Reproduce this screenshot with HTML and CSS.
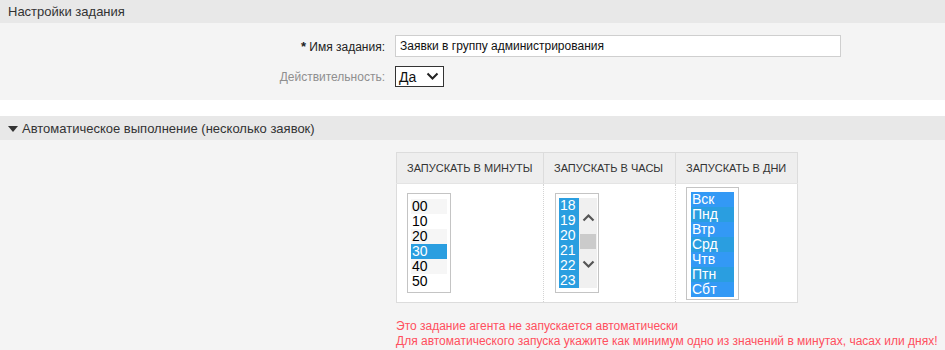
FILE: index.html
```html
<!DOCTYPE html>
<html lang="ru">
<head>
    <meta charset="UTF-8">
    <meta name="viewport" content="width=device-width, initial-scale=1.0">
    <title>Настройки задания</title>
    <link rel="stylesheet" href="styles.css">
</head>
<body>
    <section class="widget">
        <header class="widget-header">
            <h2>Настройки задания</h2>
        </header>
        <div class="widget-content form">
            <div class="field-row">
                <label class="field-label mandatory" for="jobName"><span class="star">*</span> Имя задания:</label>
                <input id="jobName" class="text-input" type="text" value="Заявки в группу администрирования">
            </div>
            <div class="field-row">
                <label class="field-label muted">Действительность:</label>
                <div class="fake-select">
                    <span>Да</span>
                    <svg width="13" height="9" viewBox="0 0 13 9"><path d="M1.5 1.5 L6.5 6.5 L11.5 1.5" fill="none" stroke="#222" stroke-width="2"/></svg>
                </div>
            </div>
        </div>
    </section>

    <section class="widget">
        <header class="widget-header">
            <h2><span class="toggle"></span>Автоматическое выполнение (несколько заявок)</h2>
        </header>
        <div class="widget-content schedule">
            <table class="schedule-table">
                <thead>
                    <tr>
                        <th>Запускать в минуты</th>
                        <th>Запускать в часы</th>
                        <th>Запускать в дни</th>
                    </tr>
                </thead>
                <tbody>
                    <tr>
                        <td>
                            <div class="listbox minutes">
                                <div class="opt">00</div>
                                <div class="opt">10</div>
                                <div class="opt">20</div>
                                <div class="opt selected">30</div>
                                <div class="opt">40</div>
                                <div class="opt">50</div>
                            </div>
                        </td>
                        <td>
                            <div class="listbox hours">
                                <div class="opts">
                                    <div class="opt selected">18</div>
                                    <div class="opt selected">19</div>
                                    <div class="opt selected">20</div>
                                    <div class="opt selected">21</div>
                                    <div class="opt selected">22</div>
                                    <div class="opt selected">23</div>
                                </div>
                                <div class="scrollbar">
                                    <svg class="arrow" width="13" height="9" viewBox="0 0 13 9"><path d="M1.5 7.5 L6.5 2.5 L11.5 7.5" fill="none" stroke="#555" stroke-width="2.2"/></svg>
                                    <div class="thumb"></div>
                                    <svg class="arrow" width="13" height="9" viewBox="0 0 13 9"><path d="M1.5 1.5 L6.5 6.5 L11.5 1.5" fill="none" stroke="#555" stroke-width="2.2"/></svg>
                                </div>
                            </div>
                        </td>
                        <td>
                            <div class="listbox days">
                                <div class="opt selected">Вск</div>
                                <div class="opt selected">Пнд</div>
                                <div class="opt selected">Втр</div>
                                <div class="opt selected">Срд</div>
                                <div class="opt selected">Чтв</div>
                                <div class="opt selected">Птн</div>
                                <div class="opt selected">Сбт</div>
                            </div>
                        </td>
                    </tr>
                </tbody>
            </table>
            <p class="error">Это задание агента не запускается автоматически<br>Для автоматического запуска укажите как минимум одно из значений в минутах, часах или днях!</p>
        </div>
    </section>
</body>
</html>
```

FILE: styles.css
```css
:root {
    --header-bg: #e8e8e8;
    --content-bg: #f4f4f4;
    --text: #333;
    --muted: #8f8f8f;
    --border: #dcdcdc;
    --blue: #2a9ee0;
    --blue-alt: #3399f5;
    --red: #ff4f5e;
}

* {
    margin: 0;
    padding: 0;
    box-sizing: border-box;
}

body {
    background: #fff;
    color: var(--text);
    font-family: "Liberation Sans", Arial, sans-serif;
    font-size: 12px;
    width: 945px;
    height: 350px;
    overflow: hidden;
}

.widget + .widget {
    margin-top: 16px;
}

.widget-header {
    background: var(--header-bg);
    height: 23px;
    display: flex;
    align-items: center;
    padding-left: 8px;
}

.widget + .widget .widget-header {
    height: 24px;
}

.widget-header h2 {
    font-size: 13px;
    font-weight: normal;
    color: #333;
    display: flex;
    align-items: center;
}

.toggle {
    width: 0;
    height: 0;
    border-left: 5px solid transparent;
    border-right: 5px solid transparent;
    border-top: 6px solid #333;
    margin-right: 4px;
    margin-top: 1px;
}

.widget-content {
    background: var(--content-bg);
}

/* form rows */
.form {
    padding: 12px 0 13px;
    display: flex;
    flex-direction: column;
    gap: 9px;
}

.field-row {
    display: flex;
    align-items: center;
}

.field-label {
    width: 385px;
    padding-right: 0;
    margin-right: 10px;
    text-align: right;
    font-size: 12px;
}

.field-label.mandatory {
    color: #222;
}

.star {
    font-weight: bold;
    font-size: 13px;
}

.field-label.muted {
    color: var(--muted);
}

.text-input {
    width: 446px;
    height: 22px;
    border: 1px solid #cfcfcf;
    background: #fff;
    padding: 0 4px;
    font-family: "Liberation Sans", Arial, sans-serif;
    font-size: 12px;
    color: #111;
    outline: none;
}

.fake-select {
    width: 49px;
    height: 21px;
    border: 1px solid #333;
    background: #fff;
    display: flex;
    align-items: center;
    justify-content: space-between;
    padding: 0 4px 0 3px;
    font-size: 14px;
    color: #111;
}

/* schedule */
.schedule {
    padding: 12px 0 3px 396px;
    height: 210px;
}

.schedule-table {
    border-collapse: collapse;
    border: 1px solid var(--border);
    background: #fff;
}

.schedule-table th {
    background: #eeeeee;
    height: 31px;
    padding: 0 10px;
    font-size: 11px;
    font-weight: normal;
    text-transform: uppercase;
    text-align: left;
    color: #333;
    border: 1px solid var(--border);
    border-bottom-color: #e4e4e4;
}

.schedule-table th:nth-child(1) { width: 147px; }
.schedule-table th:nth-child(2) { width: 132px; }
.schedule-table th:nth-child(3) { width: 122px; }

.schedule-table td {
    height: 119px;
    padding: 0 10px;
    vertical-align: middle;
    border-left: 1px dotted #d4d4d4;
}

.listbox {
    border: 1px solid #c4c4c4;
    background: #fff;
    font-size: 14px;
    line-height: 15px;
    color: #000;
}

.opt {
    height: 15px;
    padding-left: 1px;
}

.minutes {
    width: 44px;
    padding: 5px 3px 3px 3px;
    height: 100px;
}

.minutes .opt:nth-child(odd) {
    background: #f6f6f6;
}

.minutes .opt.selected {
    background: var(--blue);
    color: #fff;
}

.hours {
    width: 44px;
    height: 100px;
    padding: 4px 0 4px 3px;
    display: flex;
    margin-left: 1px;
}

.hours .opts {
    width: 20px;
}

.hours .opt {
    background: var(--blue);
    color: #fff;
}

.scrollbar {
    width: 18px;
    margin-left: 0;
    background: #f0f0f0;
    display: flex;
    flex-direction: column;
    align-items: center;
    padding-top: 15px;
}

.scrollbar .arrow {
    display: block;
}

.thumb {
    width: 16px;
    height: 15px;
    background: #cbcbcb;
    margin: 12px 0 11px;
}

.days {
    width: 53px;
    padding: 4px 4px 1px;
    height: 113px;
}

.days .opt {
    color: #fff;
    background: var(--blue-alt);
}

.days .opt:nth-child(even) {
    background: var(--blue);
}

.error {
    color: var(--red);
    font-size: 12px;
    line-height: 15px;
    margin-top: 16px;
}
```
